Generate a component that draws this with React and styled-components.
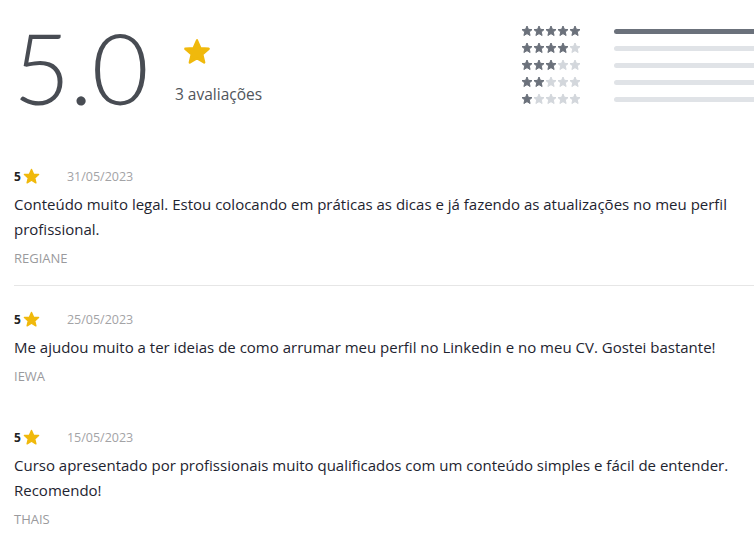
import React from "react";
import styled, { createGlobalStyle } from "styled-components";

const Global = createGlobalStyle`
  html, body { margin: 0; padding: 0; background: #fff; overflow: hidden; }
  body { font-family: "Open Sans", Lato, sans-serif; }
`;

const Page = styled.div`
  width: 754px;
  overflow: hidden;
`;

const Header = styled.section`
  display: flex;
  align-items: flex-start;
  height: 140px;
`;

const BigNumber = styled.div`
  font-family: Lato, sans-serif;
  font-weight: 300;
  font-size: 99px;
  line-height: 1;
  color: #484c53;
  margin: 17px 0 0 13px;
  letter-spacing: -1px;
`;

const Summary = styled.div`
  display: flex;
  flex-direction: column;
  margin: 38px 0 0 27px;
`;

const SummaryStar = styled.div`
  padding-left: 8px;
  height: 28px;
  display: flex;
`;

const Count = styled.div`
  font-family: "Open Sans", sans-serif;
  font-size: 15.5px;
  color: #50555b;
  margin-top: 17px;
`;

const Distribution = styled.div`
  display: grid;
  grid-template-columns: 60px 180px;
  grid-auto-rows: 12px;
  column-gap: 33px;
  row-gap: 5px;
  margin: 25px -40px 0 auto;
  flex-shrink: 0;
  align-items: center;
`;

const StarsRow = styled.div`
  display: flex;
  height: 12px;
  align-items: center;
`;

const Bar = styled.div`
  height: 5px;
  border-radius: 3px;
  background: ${(p) => (p.$active ? "#6b717b" : "#e0e3e7")};
`;

const List = styled.div`
  padding: 27px 14px 0 14px;
`;

const Review = styled.article`
  padding-bottom: ${(p) => (p.$divider ? "18px" : "43px")};
  margin-bottom: ${(p) => (p.$divider ? "24px" : "0")};
  border-bottom: ${(p) => (p.$divider ? "1px solid #e6e6e6" : "none")};
  margin-right: ${(p) => (p.$divider ? "-14px" : "0")};
`;

const Meta = styled.div`
  display: flex;
  align-items: center;
  height: 18px;
  font-family: "Open Sans", sans-serif;
  font-size: 12px;
`;

const Score = styled.span`
  font-weight: 700;
  color: #222;
  margin-right: 2px;
`;

const DateText = styled.span`
  color: #a3a3a6;
  font-size: 12.5px;
  margin-left: 27px;
`;

const Body = styled.p`
  margin: 7px 0 0 0;
  font-family: "Open Sans", sans-serif;
  font-size: 15px;
  line-height: 25px;
  color: #1e2430;
`;

const Name = styled.div`
  font-family: "Open Sans", sans-serif;
  font-size: 13px;
  color: #9a9a9d;
  margin-top: 7px;
  text-transform: uppercase;
`;

const STAR = "M12 17.27L18.18 21l-1.64-7.03L22 9.24l-7.19-.61L12 2 9.19 8.63 2 9.24l5.46 4.73L5.82 21z";

const Star = ({ size, color }) => (
  <svg width={size} height={size} viewBox="0 0 24 24">
    <path d={STAR} fill={color} stroke={color} strokeWidth="2" strokeLinejoin="round" />
  </svg>
);

const reviews = [
  {
    date: "31/05/2023",
    text: "Conteúdo muito legal. Estou colocando em práticas as dicas e já fazendo as atualizações no meu perfil profissional.",
    name: "Regiane",
  },
  {
    date: "25/05/2023",
    text: "Me ajudou muito a ter ideias de como arrumar meu perfil no Linkedin e no meu CV. Gostei bastante!",
    name: "Iewa",
  },
  {
    date: "15/05/2023",
    text: "Curso apresentado por profissionais muito qualificados com um conteúdo simples e fácil de entender. Recomendo!",
    name: "Thais",
  },
];

export default function App() {
  return (
    <Page>
      <Global />
      <Header>
        <BigNumber>5.0</BigNumber>
        <Summary>
          <SummaryStar>
            <Star size={28} color="#f0b90c" />
          </SummaryStar>
          <Count>3 avaliações</Count>
        </Summary>
        <Distribution>
          {[5, 4, 3, 2, 1].map((n) => (
            <React.Fragment key={n}>
              <StarsRow>
                {[1, 2, 3, 4, 5].map((i) => (
                  <Star key={i} size={12} color={i <= n ? "#6b717b" : "#d3d7dc"} />
                ))}
              </StarsRow>
              <Bar $active={n === 5} />
            </React.Fragment>
          ))}
        </Distribution>
      </Header>
      <List>
        {reviews.map((r, i) => (
          <Review key={r.date} $divider={i === 0}>
            <Meta>
              <Score>5</Score>
              <Star size={17} color="#f0b90c" />
              <DateText>{r.date}</DateText>
            </Meta>
            <Body>{r.text}</Body>
            <Name>{r.name}</Name>
          </Review>
        ))}
      </List>
    </Page>
  );
}
